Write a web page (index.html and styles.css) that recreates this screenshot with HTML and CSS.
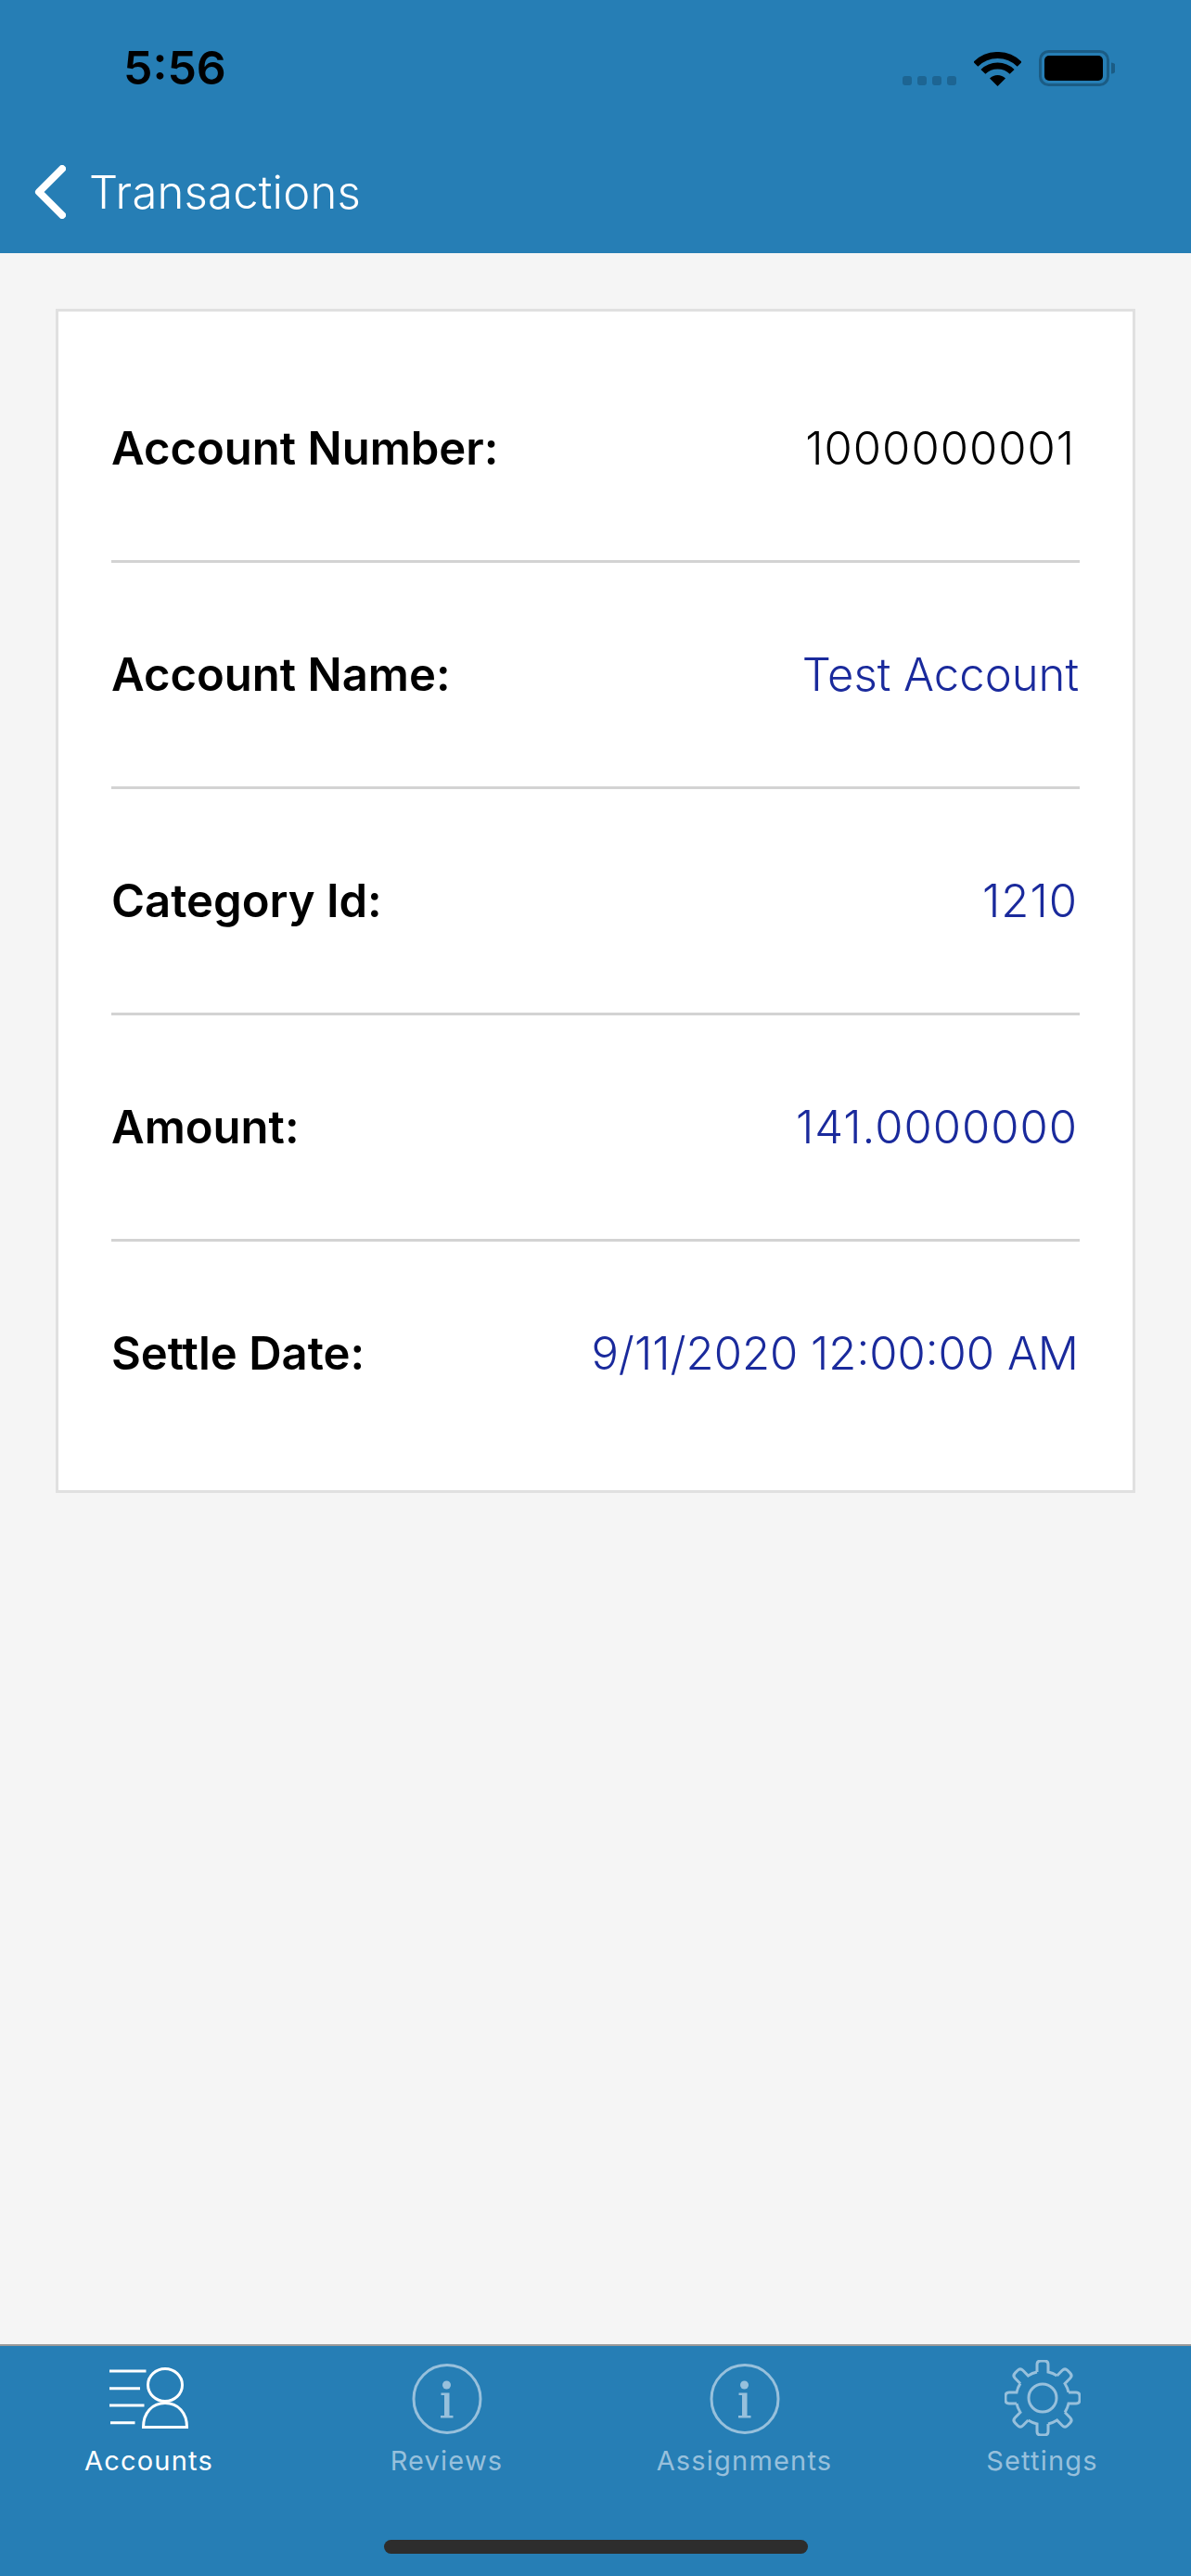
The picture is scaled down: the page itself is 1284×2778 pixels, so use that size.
FILE: index.html
```html
<!DOCTYPE html>
<html lang="en">
<head>
    <meta charset="UTF-8">
    <meta name="viewport" content="width=device-width, initial-scale=1.0">
    <title>Transactions</title>
    <link rel="stylesheet" href="styles.css">
</head>
<body>
    <div class="app">
        <header class="top">
            <!-- Status bar -->
            <div class="status">
                <span class="time">5:56</span>
                <div class="status-icons">
                    <div class="dots"><i></i><i></i><i></i><i></i></div>
                    <svg class="wifi" width="51" height="37" viewBox="0 0 51 37">
                        <path d="M1.8 13.3A33.5 33.5 0 0 1 49.2 13.3M9.9 21.4A22 22 0 0 1 41.1 21.4" fill="none" stroke="#000" stroke-width="7"/>
                        <path d="M25.5 37L17 28.5A12 12 0 0 1 34 28.5Z" fill="#000"/>
                    </svg>
                    <svg class="battery" width="82" height="39" viewBox="0 0 82 39">
                        <rect x="1.5" y="1.5" width="73" height="36" rx="9" fill="none" stroke="#1b5c85" stroke-width="3"/>
                        <rect x="6" y="6" width="63" height="27" rx="5" fill="#000"/>
                        <path d="M78 13.5A6 6 0 0 1 78 25.5Z" fill="#1b5c85"/>
                    </svg>
                </div>
            </div>
            <!-- Nav bar -->
            <div class="nav">
                <svg class="back" width="34" height="58" viewBox="0 0 34 58">
                    <path d="M30 4L5 29L30 54" fill="none" stroke="#fff" stroke-width="8" stroke-linecap="round" stroke-linejoin="round"/>
                </svg>
                <span class="nav-title">Transactions</span>
            </div>
        </header>

        <main class="content">
            <section class="card">
                <div class="row">
                    <span class="label">Account Number:</span>
                    <span class="value plain num">1000000001</span>
                </div>
                <div class="row">
                    <span class="label">Account Name:</span>
                    <span class="value text">Test Account</span>
                </div>
                <div class="row">
                    <span class="label">Category Id:</span>
                    <span class="value num">1210</span>
                </div>
                <div class="row">
                    <span class="label">Amount:</span>
                    <span class="value num">141.0000000</span>
                </div>
                <div class="row">
                    <span class="label">Settle Date:</span>
                    <span class="value text">9/11/2020 12:00:00 AM</span>
                </div>
            </section>
        </main>

        <nav class="tabs">
            <div class="tab active">
                <svg class="tab-icon" width="85" height="82" viewBox="0 -8 85 82" fill="none" stroke="currentColor" stroke-width="3">
                    <path d="M0 4H39.5M0 22.7H33M0 41H37.5M1 59.7H27.5"/>
                    <ellipse cx="60" cy="19" rx="18.5" ry="17.5"/>
                    <path d="M36.5 64.5C36.5 49 46 38.5 60 38.5C74 38.5 83.5 49 83.5 64.5Z"/>
                </svg>
                <span class="tab-label">Accounts</span>
            </div>
            <div class="tab">
                <svg class="tab-icon" width="76" height="82" viewBox="0 0 76 82" fill="none" stroke="currentColor" stroke-width="3">
                    <ellipse cx="38" cy="42" rx="36" ry="36.5"/>
                    <circle cx="37.5" cy="27" r="4.5" fill="currentColor" stroke="none"/>
                    <path d="M31.5 35.5H40.5V60H44.5V62.5H31V60H35V38H31.5Z" fill="currentColor" stroke="none"/>
                </svg>
                <span class="tab-label">Reviews</span>
            </div>
            <div class="tab">
                <svg class="tab-icon" width="76" height="82" viewBox="0 0 76 82" fill="none" stroke="currentColor" stroke-width="3">
                    <ellipse cx="38" cy="42" rx="36" ry="36.5"/>
                    <circle cx="37.5" cy="27" r="4.5" fill="currentColor" stroke="none"/>
                    <path d="M31.5 35.5H40.5V60H44.5V62.5H31V60H35V38H31.5Z" fill="currentColor" stroke="none"/>
                </svg>
                <span class="tab-label">Assignments</span>
            </div>
            <div class="tab">
                <svg class="tab-icon" width="82" height="82" viewBox="0 0 82 82" fill="none" stroke="currentColor" stroke-width="3">
                    <g transform="translate(41 41)">
                        <path id="tooth" d="M-6-28V-36Q-6-40-2-40H2Q6-40 6-36V-28A28.6 28.6 0 0 1 15.56-24.04"/>
                        <use href="#tooth" transform="rotate(45)"/>
                        <use href="#tooth" transform="rotate(90)"/>
                        <use href="#tooth" transform="rotate(135)"/>
                        <use href="#tooth" transform="rotate(180)"/>
                        <use href="#tooth" transform="rotate(225)"/>
                        <use href="#tooth" transform="rotate(270)"/>
                        <use href="#tooth" transform="rotate(315)"/>
                        <circle r="15"/>
                    </g>
                </svg>
                <span class="tab-label">Settings</span>
            </div>
            <div class="home-bar"></div>
        </nav>
    </div>
</body>
</html>
```

FILE: styles.css
```css
body {
    margin: 0;
    font-family: Inter, "Liberation Sans", sans-serif;
    background-color: #f5f5f5;
}
.app {
    display: flex;
    flex-direction: column;
    height: 2778px;
}

/* Top bar */
.top {
    height: 273px;
    background-color: #267eb5;
}
.status {
    display: flex;
    justify-content: space-between;
    align-items: center;
    height: 146px;
    padding: 0 82px 0 133px;
}
.time {
    font-size: 50px;
    font-weight: 600;
    color: #000;
}
.status-icons {
    display: flex;
    align-items: flex-end;
    gap: 19px;
}
.dots {
    display: flex;
    gap: 6px;
    margin-bottom: 1px;
}
.dots i {
    width: 10px;
    height: 10px;
    border-radius: 3px;
    background-color: #1d6593;
}
.wifi, .battery {
    display: block;
}
.nav {
    display: flex;
    align-items: center;
    height: 122px;
    padding-left: 37px;
    padding-bottom: 2px;
    gap: 25px;
}
.nav-title {
    font-size: 49px;
    font-weight: 300;
    letter-spacing: 0.2px;
    color: #fff;
}

/* Details card */
.content {
    flex: 1;
    padding: 60px 60px 0;
}
.card {
    background-color: #fff;
    border: 3px solid #e0e0e0;
    padding: 27px 57px 27px 57px;
}
.row {
    display: flex;
    justify-content: space-between;
    align-items: center;
    height: 241px;
    border-bottom: 3px solid #d3d3d3;
}
.row:last-child {
    border-bottom: none;
}
.label {
    font-size: 49px;
    font-weight: 600;
    color: #000;
}
.value {
    font-size: 49px;
    font-weight: 300;
    color: #1a2a9c;
}
.value.text {
    padding-right: 1px;
}
.value.num {
    letter-spacing: 1px;
    padding-right: 2px;
}
.value.plain {
    color: #000;
    padding-right: 5px;
}

/* Tab bar */
.tabs {
    position: relative;
    display: grid;
    grid-template-columns: repeat(4, 321px);
    height: 248px;
    background-color: #267eb5;
    border-top: 2px solid #999;
}
.tab {
    display: flex;
    flex-direction: column;
    align-items: center;
    padding-top: 15px;
    color: #97c0dc;
}
.tab.active {
    color: #fff;
}
.tab-icon {
    display: block;
}
.tab-label {
    margin-top: 9px;
    font-size: 29px;
    letter-spacing: 1.2px;
}
.home-bar {
    position: absolute;
    left: 414px;
    top: 209px;
    width: 457px;
    height: 15px;
    border-radius: 8px;
    background-color: #2d2d2d;
}
```
